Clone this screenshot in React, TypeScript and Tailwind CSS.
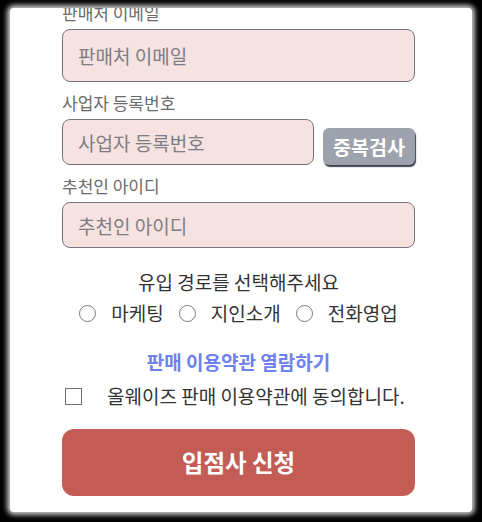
import React from 'react';

const font = { fontFamily: '"Noto Sans CJK KR", "Noto Sans", sans-serif' };

const Field: React.FC<{ label: string; placeholder: string; tall?: boolean; first?: boolean }> = ({
  label,
  placeholder,
  tall,
  first,
}) => (
  <div className={first ? '-mt-[7px]' : 'mt-[9px]'}>
    <div className="text-[17px] leading-[24px] text-[#6b6b6b]">{label}</div>
    <input
      placeholder={placeholder}
      className={`mt-[4px] w-full ${tall ? 'h-[53px]' : 'h-[46px]'} rounded-[8px] border border-[#75757f] bg-[#f6e2e0] px-[15px] text-[19px] text-[#333] placeholder:text-[#7d7d85] outline-none`}
    />
  </div>
);

const Radio: React.FC<{ label: string }> = ({ label }) => (
  <label className="flex items-center gap-[15px]">
    <span className="h-[17px] w-[17px] rounded-full border-[1.5px] border-[#7a7a7a]" />
    <span>{label}</span>
  </label>
);

export default function App() {
  return (
    <div className="h-[522px] w-[482px] bg-black px-[10px] pt-[8px]" style={font}>
      <div className="h-[504px] w-[462px] overflow-hidden rounded-[4px] bg-white shadow-[0_0_5px_3px_#c8c8c8]">
        <div className="ml-[52px] w-[353px]">
          <Field first tall label="판매처 이메일" placeholder="판매처 이메일" />

          <div className="mt-[9px]">
            <div className="text-[17px] leading-[24px] text-[#6b6b6b]">사업자 등록번호</div>
            <div className="mt-[4px] flex items-end gap-[9px]">
              <input
                placeholder="사업자 등록번호"
                className="h-[46px] w-[252px] rounded-[8px] border border-[#75757f] bg-[#f6e2e0] px-[15px] text-[19px] text-[#333] placeholder:text-[#7d7d85] outline-none"
              />
              <button className="h-[37px] w-[92px] rounded-[6px] bg-[#9ea2ad] text-[19.5px] font-bold leading-none text-white shadow-[1px_2px_1px_#3f4350]">
                중복검사
              </button>
            </div>
          </div>

          <Field label="추천인 아이디" placeholder="추천인 아이디" />

          <div className="mt-[22px] text-center text-[19px] leading-[24px] text-[#333]">
            유입 경로를 선택해주세요
          </div>
          <div className="mt-[7px] flex items-center justify-center gap-[15px] text-[19px] leading-[24px] text-[#333]">
            <Radio label="마케팅" />
            <Radio label="지인소개" />
            <Radio label="전화영업" />
          </div>

          <div className="mt-[25px] text-center text-[19px] font-bold leading-[24px] text-[#6f80ef]">
            판매 이용약관 열람하기
          </div>

          <div className="mt-[10px] flex items-center text-[19px] leading-[24px] text-[#333]">
            <span className="ml-[3px] h-[17px] w-[17px] border-[1.5px] border-[#6f6f78]" />
            <span className="ml-[25px]">올웨이즈 판매 이용약관에 동의합니다.</span>
          </div>

          <button className="mt-[21px] flex h-[67px] w-full items-center justify-center rounded-[12px] bg-[#c35c54] text-[23.5px] font-bold text-white">
            입점사 신청
          </button>
        </div>
      </div>
    </div>
  );
}
